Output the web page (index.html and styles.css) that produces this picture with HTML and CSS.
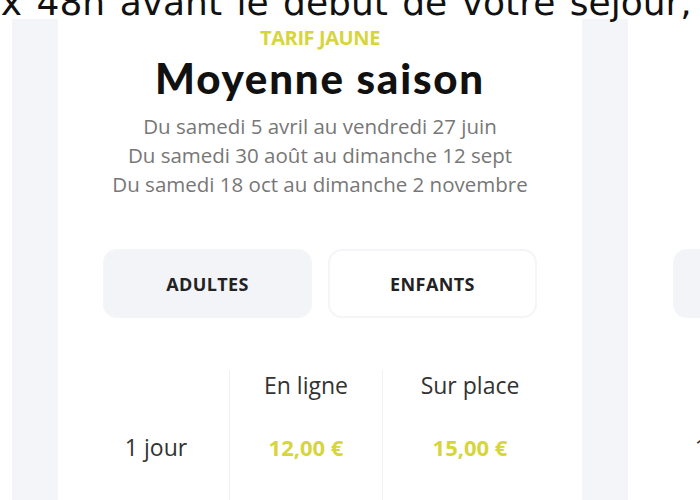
FILE: index.html
```html
<!DOCTYPE html>
<html lang="fr">
<head>
    <meta charset="UTF-8">
    <meta name="viewport" content="width=device-width, initial-scale=1.0">
    <title>Tarifs</title>
    <link rel="stylesheet" href="styles.css">
</head>
<body>
    <p class="caption">ux 48h avant le début de votre séjour,</p>
    <main class="cards">
        <section class="card">
            <p class="tag">TARIF BLEU</p>
            <h2>Basse saison</h2>
            <div class="dates">
                <p>Du samedi 1 mars au vendredi 4 avril</p>
                <p>Du samedi 13 sept au vendredi 17 oct</p>
                <p>Du lundi 3 novembre au dimanche 30 nov</p>
            </div>
            <div class="tabs">
                <div class="tab active">ADULTES</div>
                <div class="tab">ENFANTS</div>
            </div>
            <div class="prices">
                <div></div><div class="head">En ligne</div><div class="head">Sur place</div>
                <div class="label">1 jour</div><div class="price">10,00 €</div><div class="price">13,00 €</div>
                <div class="label">2 jours</div><div class="price">18,00 €</div><div class="price">24,00 €</div>
            </div>
        </section>
        <section class="card">
            <p class="tag">TARIF JAUNE</p>
            <h2>Moyenne saison</h2>
            <div class="dates">
                <p>Du samedi 5 avril au vendredi 27 juin</p>
                <p>Du samedi 30 août au dimanche 12 sept</p>
                <p>Du samedi 18 oct au dimanche 2 novembre</p>
            </div>
            <div class="tabs">
                <div class="tab active">ADULTES</div>
                <div class="tab">ENFANTS</div>
            </div>
            <div class="prices">
                <div></div><div class="head">En ligne</div><div class="head">Sur place</div>
                <div class="label">1 jour</div><div class="price">12,00 €</div><div class="price">15,00 €</div>
                <div class="label">2 jours</div><div class="price">22,00 €</div><div class="price">28,00 €</div>
            </div>
        </section>
        <section class="card">
            <p class="tag">TARIF ROUGE</p>
            <h2>Haute saison</h2>
            <div class="dates">
                <p>Du samedi 28 juin au vendredi 29 août</p>
                <p>&nbsp;</p>
                <p>&nbsp;</p>
            </div>
            <div class="tabs">
                <div class="tab active">ADULTES</div>
                <div class="tab">ENFANTS</div>
            </div>
            <div class="prices">
                <div></div><div class="head">En ligne</div><div class="head">Sur place</div>
                <div class="label">1 jour</div><div class="price">15,00 €</div><div class="price">18,00 €</div>
                <div class="label">2 jours</div><div class="price">28,00 €</div><div class="price">34,00 €</div>
            </div>
        </section>
    </main>
</body>
</html>
```

FILE: styles.css
```css
* {
    margin: 0;
    padding: 0;
    box-sizing: border-box;
}
body {
    width: 700px;
    height: 500px;
    overflow: hidden;
    position: relative;
    background-color: #f3f5f9;
    font-family: "Open Sans", "Liberation Sans", sans-serif;
}
/* bandeau de texte posé par-dessus la capture */
.caption {
    position: absolute;
    top: -17px;
    left: -22px;
    width: 760px;
    height: 36px;
    background-color: white;
    font-family: "DejaVu Sans", sans-serif;
    font-size: 36px;
    line-height: 39px;
    word-spacing: 3px;
    white-space: nowrap;
    color: #111;
    z-index: 2;
}
.cards {
    display: flex;
    gap: 46px;
    margin-left: -512px;
    height: 100%;
}
.card {
    flex-shrink: 0;
    width: 524px;
    background-color: white;
    padding: 25px 45px 0;
    text-align: center;
}
.tag {
    color: #d6d63c;
    font-weight: 700;
    font-size: 20px;
    line-height: 26px;
    letter-spacing: -0.4px;
}
h2 {
    font-family: "Lato", sans-serif;
    font-weight: 900;
    font-size: 42px;
    line-height: 50px;
    letter-spacing: 1.8px;
    color: #111;
    margin-top: 2px;
}
.dates {
    margin-top: 9px;
    color: #777;
    font-size: 20.5px;
    line-height: 29px;
}
.tabs {
    display: grid;
    grid-template-columns: 1fr 1fr;
    gap: 16px;
    margin-top: 50px;
}
.tab {
    height: 69px;
    border-radius: 14px;
    border: 2px solid #f4f5f8;
    display: flex;
    justify-content: center;
    align-items: center;
    font-weight: 700;
    font-size: 18px;
    letter-spacing: 0.4px;
    color: #222;
}
.tab.active {
    background-color: #f2f4f8;
}
.prices {
    display: grid;
    grid-template-columns: 126px 154px 1fr;
    grid-auto-rows: 62px;
    margin-top: 52px;
    font-size: 23px;
    line-height: 30px;
    color: #333;
}
.prices > div:nth-child(3n+2) {
    border-left: 1px solid #f0f1f4;
    border-right: 1px solid #f0f1f4;
}
.label {
    padding-right: 20px;
}
.prices > div:nth-child(3n) {
    padding-left: 20px;
}
.price {
    color: #d6d63c;
    font-weight: 700;
    font-size: 22px;
}
```
